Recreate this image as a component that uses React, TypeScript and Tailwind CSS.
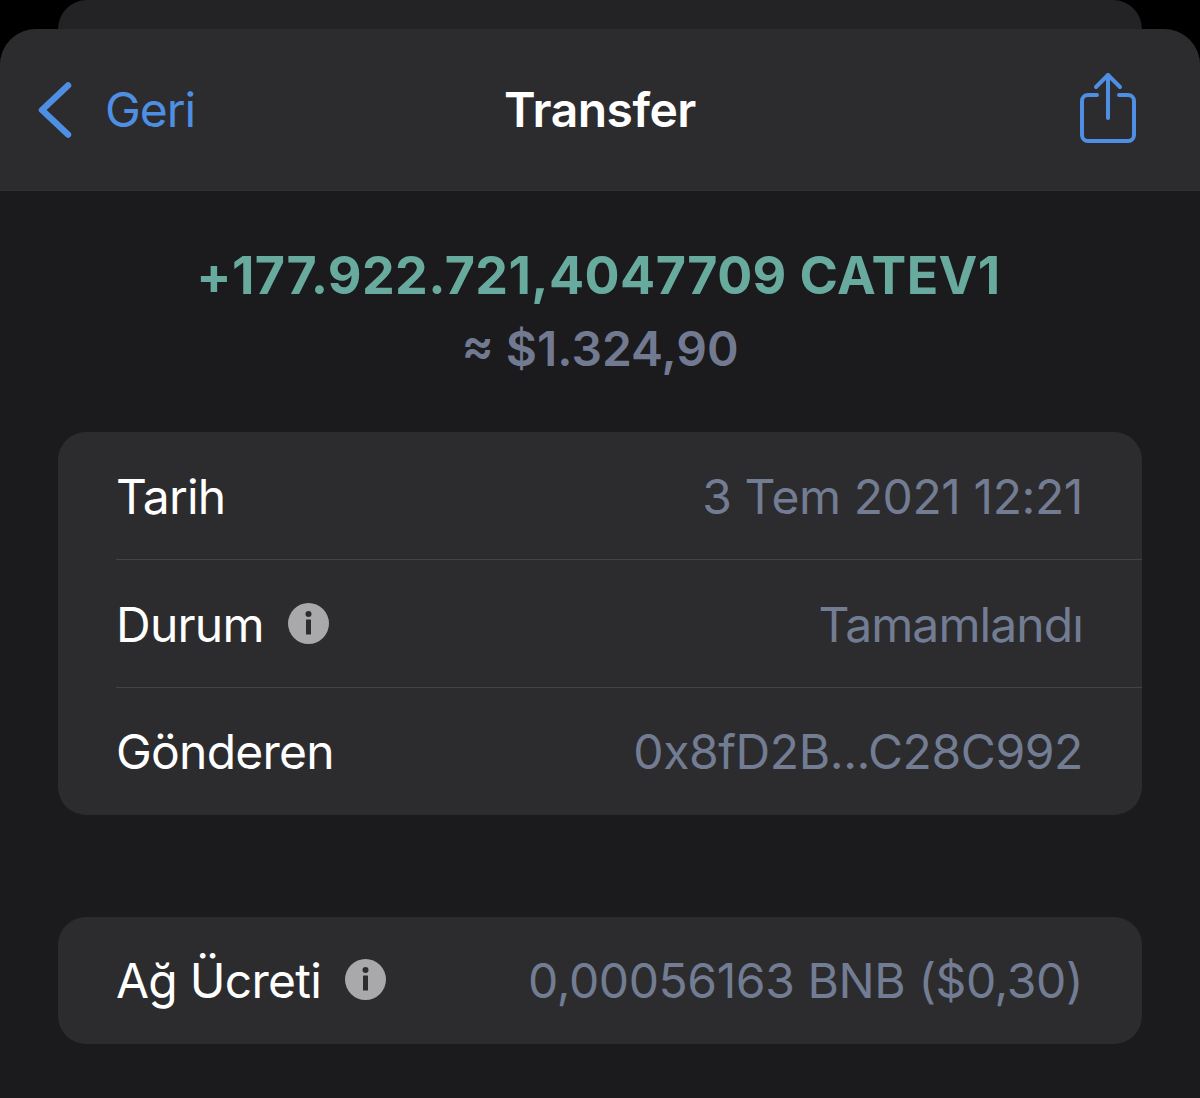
import React from "react";

const font = { fontFamily: "Inter, 'Liberation Sans', sans-serif" };

function Info() {
  return (
    <svg width="41" height="41" viewBox="0 0 41 41" className="-mt-[2px] ml-[24px] shrink-0">
      <circle cx="20.5" cy="20.5" r="20.5" fill="#a9a9ab" />
      <circle cx="20.5" cy="11" r="3" fill="#2c2c2e" />
      <rect x="18" y="16.5" width="5" height="15" rx="0.5" fill="#2c2c2e" />
    </svg>
  );
}

function Row({ label, value, info, divider, tight }: { label: string; value: string; info?: boolean; divider?: boolean; tight?: boolean }) {
  return (
    <div className={divider ? "ml-[58px] h-[128px] border-b border-[#434345]" : "ml-[58px] h-[127px]"}>
      <div className={divider ? "flex h-full items-center justify-between pr-[59px] pt-[2px]" : "flex h-full items-center justify-between pr-[59px]"}>
        <div className="flex items-center text-[48px] tracking-[-0.75px] text-white">
          <span>{label}</span>
          {info && <Info />}
        </div>
        <span className={tight ? "text-[48px] tracking-[-0.9px] text-[#727d93]" : "text-[48px] tracking-[-0.4px] text-[#727d93]"}>{value}</span>
      </div>
    </div>
  );
}

export default function App() {
  return (
    <div className="h-[1098px] w-[1200px] overflow-hidden bg-black" style={font}>
      <div className="mx-[58px] h-[29px] rounded-t-[30px] bg-[#232325]" />
      <div className="h-[1069px] rounded-t-[36px] bg-[#1b1b1d]">
        <header className="relative flex h-[162px] items-center justify-between rounded-t-[36px] border-b border-[#313133] bg-[#2c2c2e] pl-[38px] pr-[64px]">
          <div className="flex items-center gap-[33px]">
            <svg width="34" height="56" viewBox="0 0 34 56" fill="none">
              <path d="M30 3.5 4 28l26 24.5" stroke="#4f8fe3" strokeWidth="6.5" strokeLinecap="round" strokeLinejoin="round" />
            </svg>
            <span className="text-[48px] tracking-[-1px] text-[#4f8fe3]">Geri</span>
          </div>
          <span className="absolute left-0 right-0 text-center text-[48px] font-semibold tracking-[-0.5px] text-white">Transfer</span>
          <svg width="56" height="72" viewBox="0 0 56 72" fill="none" stroke="#4f8fe3" strokeLinecap="round" strokeLinejoin="round" strokeWidth="4" className="-mt-[4px]">
            <path d="M17 23H8a6 6 0 0 0-6 6v34a6 6 0 0 0 6 6h40a6 6 0 0 0 6-6V29a6 6 0 0 0-6-6h-9" />
            <path d="M28 46V3" />
            <path d="M16 15 28 3l12 12" />
          </svg>
        </header>
        <section className="flex h-[241px] flex-col items-center pt-[53px]">
          <div className="pr-[3px] text-[52px] font-bold leading-[64px] tracking-[0.4px] text-[#68ab9e]">+177.922.721,4047709 CATEV1</div>
          <div className="mt-[13px] text-[48px] font-semibold leading-[56px] text-[#727a91]">≈ $1.324,90</div>
        </section>
        <div className="mx-[58px] overflow-hidden rounded-[28px] bg-[#2c2c2e]">
          <Row label="Tarih" value="3 Tem 2021 12:21" divider />
          <Row label="Durum" value="Tamamlandı" info divider tight />
          <Row label="Gönderen" value="0x8fD2B...C28C992" />
        </div>
        <div className="mx-[58px] mt-[102px] overflow-hidden rounded-[28px] bg-[#2c2c2e]">
          <Row label="Ağ Ücreti" value="0,00056163 BNB ($0,30)" info />
        </div>
      </div>
    </div>
  );
}
